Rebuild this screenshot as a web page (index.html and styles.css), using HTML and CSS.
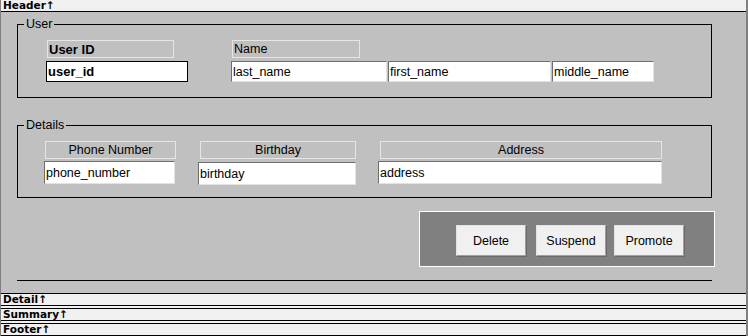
FILE: index.html
```html
<!DOCTYPE html>
<html lang="en">
<head>
  <meta charset="UTF-8" />
  <title>User report</title>
  <link rel="stylesheet" href="styles.css">
</head>
<body>
  <div class="report">
    <div class="band band-top">Header↑</div>

    <div class="section">
      <fieldset class="group group-user">
        <legend>User</legend>
        <div class="field field-id">
          <div class="caption caption-bold">User ID</div>
          <input class="box box-bold" type="text" value="user_id" />
        </div>
        <div class="field field-name">
          <div class="caption caption-name">Name</div>
          <div class="name-row">
            <input class="box box-inset w-last" type="text" value="last_name" />
            <input class="box box-inset w-first" type="text" value="first_name" />
            <input class="box box-inset w-middle" type="text" value="middle_name" />
          </div>
        </div>
      </fieldset>

      <fieldset class="group group-details">
        <legend>Details</legend>
        <div class="field field-phone">
          <div class="caption caption-center">Phone Number</div>
          <input class="box box-inset" type="text" value="phone_number" />
        </div>
        <div class="field field-birthday">
          <div class="caption caption-center">Birthday</div>
          <input class="box box-inset" type="text" value="birthday" />
        </div>
        <div class="field field-address">
          <div class="caption caption-center">Address</div>
          <input class="box box-inset" type="text" value="address" />
        </div>
      </fieldset>

      <div class="actions">
        <div class="button-panel">
          <button>Delete</button>
          <button>Suspend</button>
          <button class="btn-last">Promote</button>
        </div>
      </div>

      <hr class="rule" />
    </div>

    <div class="band band-ruled">Detail↑</div>
    <div class="band band-ruled">Summary↑</div>
    <div class="band band-ruled">Footer↑</div>
  </div>
</body>
</html>
```

FILE: styles.css
```css
* {
  box-sizing: border-box;
}
body {
  margin: 0;
  font-family: "Liberation Sans", Arial, sans-serif;
  font-size: 12.5px;
  color: #000;
  background: #f0f0f0;
}
.report {
  width: 748px;
  height: 336px;
  border-left: 1px solid #808080;
  border-right: 2px solid #808080;
  background: #f0f0f0;
  display: flex;
  flex-direction: column;
  overflow: hidden;
}

/* bands */
.band {
  flex: none;
  font-family: "DejaVu Sans", sans-serif;
  font-weight: bold;
  font-size: 10.5px;
  line-height: 11px;
  padding-left: 2px;
  background: #f0f0f0;
  white-space: nowrap;
}
.band-top {
  height: 12px;
  border-bottom: 1px solid #000;
}
.band-ruled {
  height: 13px;
  border-top: 1px solid #000;
  border-bottom: 1px solid #000;
  margin-bottom: 2px;
}

/* main section */
.section {
  flex: none;
  height: 281px;
  background: #c0c0c0;
  padding: 0 34px 0 16px;
  display: flex;
  flex-direction: column;
}
.group {
  margin: 0;
  padding: 0;
  border: 1px solid #000;
  min-width: 0;
  display: flex;
  align-items: flex-start;
}
.group legend {
  margin-left: 6px;
  padding: 0 2px;
  line-height: 12px;
  font-size: 12.5px;
}
.group-user {
  margin-top: 6px;
  height: 80px;
  padding-top: 10px;
}
.group-details {
  margin-top: 21px;
  height: 79px;
  padding-top: 10px;
  gap: 22px;
}

.field {
  display: flex;
  flex-direction: column;
  align-items: flex-start;
}
.caption {
  height: 18px;
  line-height: 17px;
  border: 1px solid #e6e6e6;
  padding-left: 1px;
  white-space: nowrap;
}
.caption-bold {
  font-weight: bold;
  font-size: 13px;
}
.caption-center {
  text-align: center;
  padding-left: 0;
}
.box {
  font: inherit;
  color: #000;
  margin: 3px 0 0;
  padding: 0 1px;
  background: #fff;
  outline: none;
}
.box-bold {
  font-weight: bold;
  font-size: 13px;
  width: 142px;
  height: 21px;
  border: 1px solid #000;
}
.box-inset {
  height: 21px;
  border: 1px solid;
  border-color: #6e6e6e #e3e3e3 #e3e3e3 #6e6e6e;
}

.field-id {
  margin-left: 28px;
}
.field-id .caption {
  margin-left: 1px;
  width: 127px;
}
.field-name {
  margin-left: 43px;
}
.caption-name {
  margin-left: 1px;
  width: 128px;
}
.name-row {
  display: flex;
  gap: 1px;
}
.w-last { width: 156px; }
.w-first { width: 163px; }
.w-middle { width: 102px; }

.field-phone {
  margin-left: 26px;
}
.field-phone .caption { margin-left: 1px; width: 131px; }
.field-phone .box { width: 131px; }
.field-birthday .caption { margin-left: 2px; width: 156px; }
.field-birthday .box { width: 158px; }
.field-address .caption { margin-left: 2px; width: 282px; }
.field-address .box { width: 284px; }
.group-details .box {
  height: 23px;
  margin-top: 2px;
}
.group-details .field-birthday .box {
  margin-top: 3px;
}

/* buttons */
.actions {
  display: flex;
  justify-content: flex-end;
  margin: 13px -3px 0 0;
}
.button-panel {
  width: 296px;
  height: 56px;
  border: 1px solid #fff;
  background: #808080;
  padding: 13px 0 0 36px;
  display: flex;
  align-items: flex-start;
  gap: 10px;
}
.button-panel button {
  width: 70px;
  height: 31px;
  font: inherit;
  color: #000;
  background: #f0f0f0;
  border: 1px solid;
  border-color: #e3e3e3 #a0a0a0 #a0a0a0 #e3e3e3;
  box-shadow: 1px 1px 0 #696969;
  padding: 0;
}
.button-panel .btn-last {
  margin-left: -2px;
}
.rule {
  margin: 13px 0 0;
  border: none;
  border-top: 1px solid #000;
  height: 0;
}
```
